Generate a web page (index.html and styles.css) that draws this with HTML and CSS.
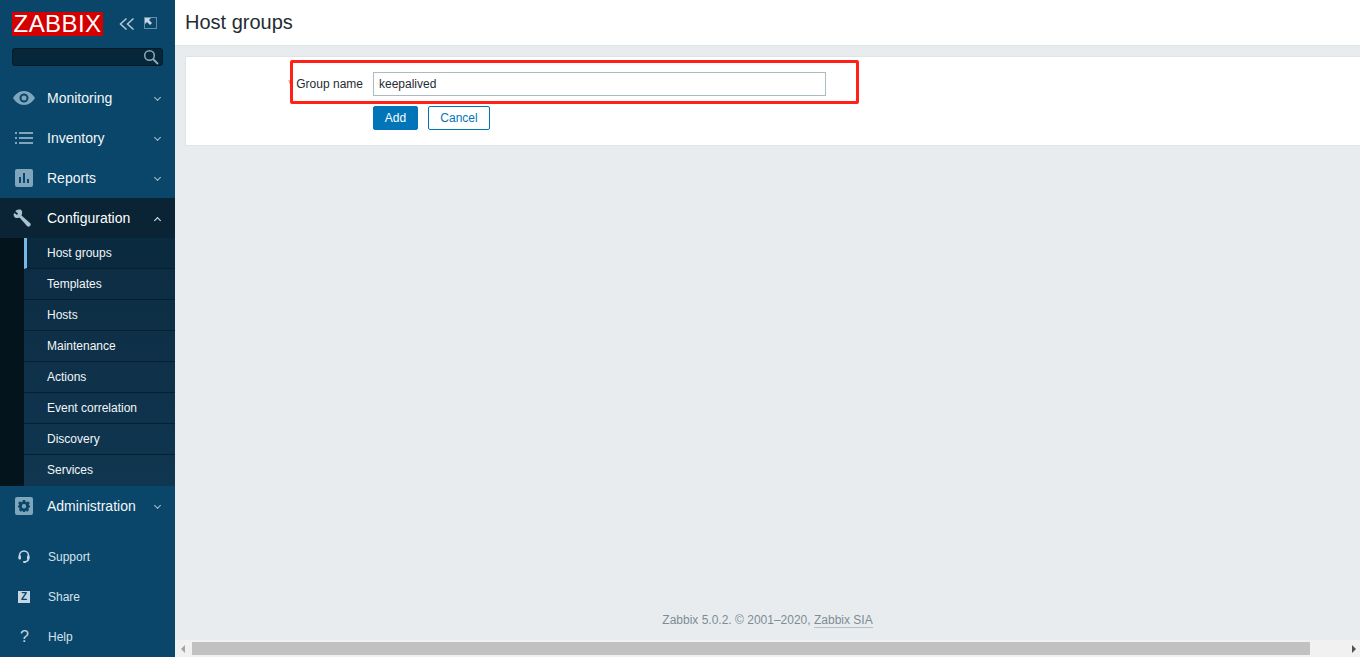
FILE: index.html
```html
<!DOCTYPE html>
<html lang="en">
<head>
    <meta charset="UTF-8">
    <title>Host groups</title>
    <link rel="stylesheet" href="styles.css">
</head>
<body>

    <aside class="sidebar">
        <div class="brand">
            <div class="logo">ZABBIX</div>
            <svg class="brand-icon collapse" width="16" height="14" viewBox="0 0 16 14">
                <path d="M7.5 1.5 L1.5 7 L7.5 12.5 M14.5 1.5 L8.5 7 L14.5 12.5" fill="none" stroke="#b4cbd9" stroke-width="1.5"/>
            </svg>
            <svg class="brand-icon expand" width="14" height="14" viewBox="0 0 14 14">
                <rect x="0.5" y="0.5" width="12" height="11" fill="none" stroke="#c5d7e2" stroke-dasharray="1 1"/>
                <path d="M1 1 H7 L5 3 L8 6 L6 8 L3 5 L1 7 Z" fill="#c5d7e2"/>
            </svg>
        </div>

        <div class="search">
            <svg width="16" height="16" viewBox="0 0 16 16">
                <circle cx="6.5" cy="6.5" r="4.8" fill="none" stroke="#8fa9b9" stroke-width="1.5"/>
                <path d="M10 10 L15 15" stroke="#8fa9b9" stroke-width="2"/>
            </svg>
        </div>

        <nav class="menu">
            <a class="menu-item">
                <svg class="menu-icon" width="22" height="16" viewBox="0 0 22 16">
                    <path fill-rule="evenodd" d="M11 1 C16 1 20 4.500 22 8 C20 11.500 16 15 11 15 C6 15 2 11.500 0 8 C2 4.500 6 1 11 1 Z M11 3.500 A4.500 4.500 0 1 0 11 12.500 A4.500 4.500 0 1 0 11 3.500 Z" fill="#7fa6bd"/>
                    <circle cx="11" cy="8" r="2.500" fill="#7fa6bd"/>
                </svg>
                <span class="menu-label">Monitoring</span>
                <span class="chevron"></span>
            </a>
            <a class="menu-item">
                <svg class="menu-icon" width="18" height="12" viewBox="0 0 18 12">
                    <path d="M0 0 H2 V2 H0 Z M4 0 H18 V2 H4 Z M0 5 H2 V7 H0 Z M4 5 H18 V7 H4 Z M0 10 H2 V12 H0 Z M4 10 H18 V12 H4 Z" fill="#7fa6bd"/>
                </svg>
                <span class="menu-label">Inventory</span>
                <span class="chevron"></span>
            </a>
            <a class="menu-item">
                <svg class="menu-icon" width="18" height="18" viewBox="0 0 18 18">
                    <rect width="18" height="18" rx="2" fill="#7fa6bd"/>
                    <path d="M4 8 H6 V14 H4 Z M8 4 H10 V14 H8 Z M12 10 H14 V14 H12 Z" fill="#0a466a"/>
                </svg>
                <span class="menu-label">Reports</span>
                <span class="chevron"></span>
            </a>

            <div class="menu-open">
                <a class="menu-item">
                    <svg class="menu-icon" width="18" height="18" viewBox="0 0 18 18">
                        <path d="M7.500 0.500 C4.500 0 2 2 2.500 2.500 L5 4.500 L4 6 L1.500 4 C0 5 0.500 7.500 2 8.500 C3.500 9.500 5 9 6.500 8.500 L14 17 C15 18 16 17.800 17 17 C18 16 18 15 17 14 L8.500 6.500 C9.500 3.500 9.500 1.500 7.500 0.500 Z" fill="#a9c1d0"/>
                    </svg>
                    <span class="menu-label">Configuration</span>
                    <span class="chevron up"></span>
                </a>
                <ul class="submenu">
                    <li class="selected">Host groups</li>
                    <li>Templates</li>
                    <li>Hosts</li>
                    <li>Maintenance</li>
                    <li>Actions</li>
                    <li>Event correlation</li>
                    <li>Discovery</li>
                    <li>Services</li>
                </ul>
            </div>

            <a class="menu-item">
                <svg class="menu-icon" width="18" height="18" viewBox="0 0 18 18">
                    <rect width="18" height="18" rx="2" fill="#7fa6bd"/>
                    <path fill-rule="evenodd" d="M7.800 3 H10.200 L10.500 4.700 L11.700 5.200 L13.100 4.200 L14.800 5.900 L13.800 7.300 L14.300 8.500 L15 8.800 V10.200 L13.800 10.700 L13.300 11.900 L14 13.100 L12.300 14.800 L11 13.800 L10.300 14.100 L10 15 H8 L7.700 14.100 L7 13.800 L5.700 14.800 L4 13.100 L4.700 11.900 L4.200 10.700 L3 10.200 V8.800 L3.700 8.500 L4.200 7.300 L3.200 5.900 L4.900 4.200 L6.300 5.200 L7.500 4.700 Z M9 7 A2.200 2.200 0 1 0 9 11.400 A2.200 2.200 0 1 0 9 7 Z" fill="#0a466a"/>
                </svg>
                <span class="menu-label">Administration</span>
                <span class="chevron"></span>
            </a>
        </nav>

        <div class="links">
            <a class="link-item">
                <svg class="link-icon" width="12" height="14" viewBox="0 0 12 14">
                    <path d="M1.500 8.500 V5.500 A4.500 4.500 0 0 1 10.500 5.500 V8.500 C10.500 10.500 9 11.500 7 12" fill="none" stroke="#c5d7e2" stroke-width="1.600"/>
                    <rect x="0.500" y="5.500" width="2.500" height="4" rx="1" fill="#c5d7e2"/>
                    <rect x="9" y="5.500" width="2.500" height="4" rx="1" fill="#c5d7e2"/>
                    <rect x="5" y="11" width="3" height="2" rx="1" fill="#c5d7e2"/>
                </svg>
                <span>Support</span>
            </a>
            <a class="link-item">
                <span class="share-icon">Z</span>
                <span>Share</span>
            </a>
            <a class="link-item">
                <span class="help-icon">?</span>
                <span>Help</span>
            </a>
        </div>
    </aside>

    <main class="main">
        <header class="page-header">
            <h1>Host groups</h1>
        </header>

        <section class="content">
            <form class="card">
                <div class="form-row">
                    <label class="form-label"><span class="required">*</span> Group name</label>
                    <input class="text-input" type="text" value="keepalived">
                </div>
                <div class="form-row buttons">
                    <span class="form-label"></span>
                    <button class="btn-add" type="button">Add</button>
                    <button class="btn-cancel" type="button">Cancel</button>
                </div>
                <div class="annotation"></div>
            </form>
        </section>

        <footer class="page-footer">
            Zabbix 5.0.2. © 2001–2020, <a class="footer-link">Zabbix SIA</a>
        </footer>

        <div class="hscroll">
            <span class="arrow left"></span>
            <div class="track"><div class="thumb"></div></div>
            <span class="arrow right"></span>
        </div>
    </main>

</body>
</html>
```

FILE: styles.css
```css
* {
    box-sizing: border-box;
}

html, body {
    height: 100%;
}

body {
    margin: 0;
    display: flex;
    height: 100vh;
    overflow: hidden;
    background-color: #e9ecef;
    font-family: "Liberation Sans", Arial, sans-serif;
    font-size: 12px;
    color: #1f2c33;
}

/* sidebar */
.sidebar {
    width: 175px;
    flex-shrink: 0;
    background-color: #0a466a;
    display: flex;
    flex-direction: column;
}

.brand {
    display: flex;
    align-items: center;
    padding: 12px 0 0 12px;
    height: 38px;
}

.logo {
    width: 91px;
    height: 24px;
    background-color: #d40000;
    color: #fff;
    font-size: 24px;
    line-height: 24px;
    text-align: center;
    letter-spacing: 0.4px;
}

.collapse {
    margin-left: 16px;
}

.expand {
    margin-left: 9px;
}

.search {
    margin: 12px 12px 0;
    height: 24px;
    background-color: #06273a;
    border: 1px solid #041a27;
    border-radius: 3px;
    display: flex;
    justify-content: flex-end;
    align-items: center;
    padding-right: 3px;
}

.menu {
    margin-top: 12px;
}

.menu-item {
    display: flex;
    align-items: center;
    height: 40px;
    color: #f2f6f9;
    font-size: 14px;
    position: relative;
}

.menu-icon {
    margin-left: 15px;
    flex-shrink: 0;
}

.menu-label {
    position: absolute;
    left: 47px;
}

.chevron {
    position: absolute;
    left: 155px;
    top: 17px;
    width: 5px;
    height: 5px;
    border-right: 1px solid #a9c1d0;
    border-bottom: 1px solid #a9c1d0;
    transform: rotate(45deg);
}

.chevron.up {
    top: 20px;
    transform: rotate(225deg);
    border-color: #e4edf2;
}

.menu-item:nth-child(1) .menu-icon {
    margin-left: 13px;
}

.menu-open {
    background-color: #04141d;
}

.menu-open .menu-item {
    background-color: #0a2435;
    color: #fff;
}

.submenu {
    list-style: none;
    margin: 0 0 0 24px;
    padding: 0;
    background: linear-gradient(#0c2c42, #103650);
}

.submenu li {
    height: 31px;
    line-height: 30px;
    padding-left: 23px;
    color: #f2f6f9;
    border-bottom: 1px solid #06202f;
}

.submenu li:last-child {
    border-bottom: none;
}

.submenu .selected {
    padding-left: 20px;
    border-left: 3px solid #78b8e4;
    background-color: #0a2a3f;
}

.links {
    margin-top: 11px;
}

.link-item {
    display: flex;
    align-items: center;
    height: 40px;
    color: #d5e3eb;
    position: relative;
}

.link-item > span:last-child {
    position: absolute;
    left: 48px;
}

.link-icon {
    margin-left: 18px;
}

.share-icon {
    margin-left: 18px;
    width: 12px;
    height: 12px;
    background-color: #c5d7e2;
    color: #0a466a;
    font-size: 10px;
    font-weight: bold;
    line-height: 12px;
    text-align: center;
}

.help-icon {
    margin-left: 20px;
    font-size: 16px;
    color: #c5d7e2;
}

/* main area */
.main {
    flex: 1;
    min-width: 0;
    display: flex;
    flex-direction: column;
}

.page-header {
    height: 46px;
    flex-shrink: 0;
    background-color: #fff;
    border-bottom: 1px solid #dfe4e7;
    padding-left: 10px;
    display: flex;
    align-items: center;
}

h1 {
    margin: 0 0 1px;
    font-size: 20px;
    font-weight: normal;
    color: #1f2c33;
}

.content {
    flex: 1;
    padding: 10px 0 0 10px;
}

.card {
    position: relative;
    height: 90px;
    background-color: #fff;
    border: 1px solid #dfe4e7;
    border-right: none;
    padding-top: 15px;
}

.form-row {
    display: flex;
    align-items: center;
}

.buttons {
    margin-top: 10px;
}

.form-label {
    width: 187px;
    padding-right: 10px;
    text-align: right;
    color: #1f2c33;
}

.required {
    color: #dc3f3f;
}

.text-input {
    width: 453px;
    height: 24px;
    padding: 0 5px;
    border: 1px solid #acbbc2;
    background-color: #fff;
    font-family: inherit;
    font-size: 12px;
    color: #1f2c33;
    outline: none;
}

.btn-add, .btn-cancel {
    height: 24px;
    border-radius: 2px;
    font-family: inherit;
    font-size: 12px;
    padding: 0;
}

.btn-add {
    width: 45px;
    background-color: #0275b8;
    border: 1px solid #0275b8;
    color: #fff;
}

.btn-cancel {
    width: 62px;
    margin-left: 10px;
    background-color: #fff;
    border: 1px solid #0275b8;
    color: #0275b8;
}

/* red box drawn over the screenshot */
.annotation {
    position: absolute;
    left: 104px;
    top: 3px;
    width: 569px;
    height: 44px;
    border: 3px solid #ff2116;
    border-radius: 2px;
    pointer-events: none;
}

.page-footer {
    flex-shrink: 0;
    height: 34px;
    padding-top: 7px;
    text-align: center;
    color: #7d8c95;
}

.footer-link {
    border-bottom: 1px solid #b5c0c6;
}

.hscroll {
    flex-shrink: 0;
    height: 17px;
    background-color: #f1f1f1;
    display: flex;
    align-items: center;
}

.track {
    flex: 1;
    height: 13px;
    margin: 0 3px 0 0;
}

.thumb {
    margin-left: 0;
    width: 1118px;
    height: 13px;
    background-color: #c1c1c1;
}

.arrow {
    width: 17px;
    flex-shrink: 0;
    height: 7px;
    display: block;
    position: relative;
}

.arrow::before {
    content: "";
    position: absolute;
    top: 0;
    border-top: 4px solid transparent;
    border-bottom: 4px solid transparent;
}

.arrow.left::before {
    left: 6px;
    border-right: 4px solid #a3a3a3;
}

.arrow.right::before {
    right: 4px;
    border-left: 4px solid #505050;
}
```
